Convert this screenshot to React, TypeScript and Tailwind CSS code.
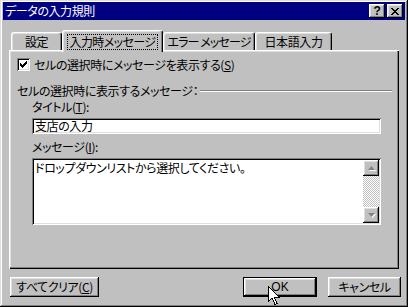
import React from 'react';

const font = "font-['Noto_Sans_CJK_JP','Noto_Sans',sans-serif] [font-feature-settings:'palt'] text-[12px] leading-[14px] tracking-[-0.4px] text-black";

const raised =
  'bg-[#c0c0c0] shadow-[inset_-1px_-1px_#000,inset_1px_1px_#fff,inset_-2px_-2px_#808080,inset_2px_2px_#dfdfdf]';
const sunken =
  'bg-white shadow-[inset_1px_1px_#808080,inset_-1px_-1px_#fff,inset_2px_2px_#000,inset_-2px_-2px_#dfdfdf]';

function Tab({ label, width, active, tight }: { label: string; width: number; active?: boolean; tight?: boolean }) {
  if (active) {
    return (
      <div
        style={{ width }}
        className="relative z-10 -mb-[2px] flex h-[22px] items-start justify-center rounded-t-[3px] border-l border-t border-r border-l-white border-t-white border-r-black bg-[#c0c0c0] pt-[3px] shadow-[inset_-1px_0_#808080,inset_1px_1px_#dfdfdf]"
      >
        <span className="whitespace-nowrap border border-dotted border-black px-[2px] tracking-[-0.6px]">{label}</span>
      </div>
    );
  }
  return (
    <div
      style={{ width }}
      className="flex h-[18px] items-start justify-center rounded-t-[3px] border-l border-t border-r border-l-white border-t-white border-r-black bg-[#c0c0c0] pt-[2px] shadow-[inset_-1px_0_#808080,inset_1px_1px_#dfdfdf]"
    >
      <span className={tight ? 'whitespace-nowrap tracking-[-0.9px]' : 'whitespace-nowrap'}>{label}</span>
    </div>
  );
}

function Arrow({ down }: { down?: boolean }) {
  return (
    <div className={`flex h-[16px] w-[16px] items-center justify-center ${raised}`}>
      <svg width="9" height="6" viewBox="0 0 9 6">
        {down ? (
          <>
            <path d="M1 1h7l-3.5 4z" fill="#fff" transform="translate(1 1)" />
            <path d="M1 1h7l-3.5 4z" fill="#808080" />
          </>
        ) : (
          <>
            <path d="M1 5h7l-3.5-4z" fill="#fff" transform="translate(1 1)" />
            <path d="M1 5h7l-3.5-4z" fill="#808080" />
          </>
        )}
      </svg>
    </div>
  );
}

export default function App() {
  return (
    <div
      className={`relative flex h-[307px] w-[408px] flex-col bg-[#c0c0c0] px-[3px] pt-[2px] shadow-[inset_-1px_-1px_#000,inset_1px_1px_#dfdfdf,inset_-2px_-2px_#808080,inset_2px_2px_#fff] ${font}`}
    >
      {/* title bar */}
      <div className="flex h-[18px] items-center bg-[#000080] pl-[2px] pr-[2px]">
        <span className="text-white">データの入力規則</span>
        <div className="ml-auto flex gap-[2px]">
          <div className={`flex h-[14px] w-[16px] items-center justify-center ${raised}`}>
            <span className="font-['Liberation_Sans',sans-serif] text-[12px] font-bold leading-[12px]">?</span>
          </div>
          <div className={`flex h-[14px] w-[16px] items-center justify-center ${raised}`}>
            <svg width="8" height="7" viewBox="0 0 8 7" shapeRendering="crispEdges">
              <path
                d="M0 0h2v1h1v1h2V1h1V0h2v1H7v1H6v1H5v1h1v1h1v1h1v1H6V6H5V5H3v1H2v1H0V6h1V5h1V4h1V3H2V2H1V1H0z"
                fill="#000"
              />
            </svg>
          </div>
        </div>
      </div>

      {/* tabs */}
      <div className="mt-[10px] flex h-[20px] items-end pl-[8px]">
        <Tab label="設定" width={51} />
        <Tab label="入力時メッセージ" width={101} active />
        <Tab label="エラー メッセージ" width={92} tight />
        <Tab label="日本語入力" width={77} />
      </div>

      {/* panel */}
      <div className="mx-[6px] flex h-[219px] flex-col bg-[#c0c0c0] pl-[8px] pr-[7px] pt-[8px] shadow-[inset_1px_1px_#fff,inset_-1px_-1px_#000,inset_-2px_-2px_#808080,inset_2px_2px_#dfdfdf]">
        <div className="flex h-[13px] items-center">
          <div className={`flex h-[13px] w-[13px] items-center justify-center ${sunken}`}>
            <svg width="7" height="7" viewBox="0 0 7 7" shapeRendering="crispEdges">
              <path d="M6 0h1v3H6v1H5v1H4v1H3v1H2V6H1V5H0V2h1v1h1v1h1V3h1V2h1V1h1z" fill="#000" />
            </svg>
          </div>
          <span className="ml-[4px] whitespace-nowrap">
            セルの選択時にメッセージを表示する(<u>S</u>)
          </span>
        </div>

        <div className="mt-[13px] flex h-[14px] items-center">
          <span className="whitespace-nowrap">セルの選択時に表示するメッセージ：</span>
          <div className="ml-[2px] h-[2px] flex-1 border-t border-b border-t-[#808080] border-b-white" />
        </div>

        <div className="ml-[15px] flex flex-col">
          <span className="mt-[2px] h-[14px]">
            タイトル(<u>T</u>):
          </span>
          <div className={`mt-[4px] flex h-[16px] w-[349px] items-center pl-[3px] ${sunken}`}>
            支店の入力
          </div>

          <span className="mt-[6px] h-[14px]">
            メッセージ(<u>I</u>):
          </span>
          <div className={`mt-[4px] flex h-[67px] w-[349px] p-[2px] ${sunken}`}>
            <div className="flex-1 pl-[1px] pt-[1px]">ドロップダウンリストから選択してください。</div>
            <div className="flex w-[16px] flex-col bg-[repeating-conic-gradient(#c0c0c0_0_25%,#fff_0_50%)] bg-[length:2px_2px]">
              <Arrow />
              <div className="flex-1" />
              <Arrow down />
            </div>
          </div>
        </div>
      </div>

      {/* bottom buttons */}
      <div className="mt-[8px] flex pl-[7px] pr-[4px]">
        <div className={`flex h-[20px] w-[89px] items-center justify-center whitespace-nowrap ${raised}`}>
          すべてクリア(<u>C</u>)
        </div>
        <div className="ml-auto flex h-[20px] w-[74px] items-center justify-center border border-black bg-[#c0c0c0] shadow-[inset_-1px_-1px_#000,inset_1px_1px_#fff,inset_-2px_-2px_#808080,inset_2px_2px_#dfdfdf]">
          <span className="font-['Liberation_Sans',sans-serif] tracking-normal">OK</span>
        </div>
        <div className={`ml-[11px] flex h-[20px] w-[73px] items-center justify-center ${raised}`}>
          キャンセル
        </div>
      </div>

      {/* mouse pointer */}
      <svg
        className="absolute left-[268px] top-[286px]"
        width="13"
        height="20"
        viewBox="0 0 13 20"
        shapeRendering="crispEdges"
      >
        <path d="M0.5 0.5v15l3.5-3.5 3 6.5 2-1-3-6.5h5z" fill="#fff" stroke="#000" strokeWidth="1" />
      </svg>
    </div>
  );
}
